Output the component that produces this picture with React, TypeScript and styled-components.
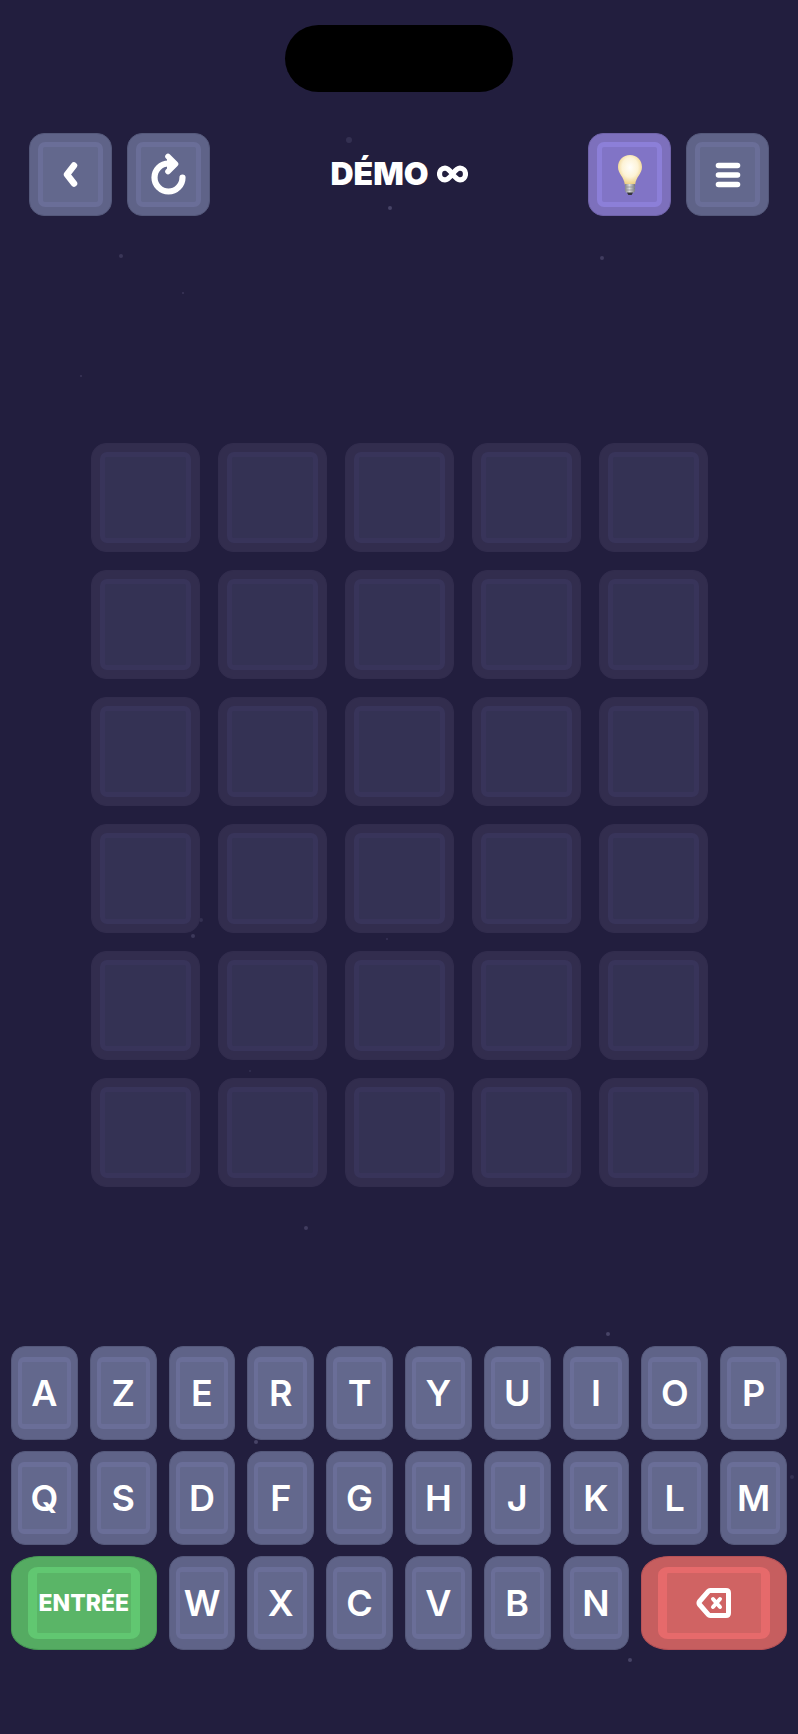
import React from "react";
import styled, { createGlobalStyle, css } from "styled-components";

const GlobalStyle = createGlobalStyle`
  *, *::before, *::after { box-sizing: border-box; }
  body { margin: 0; background: #221e3e; }
  button { font: inherit; color: inherit; margin: 0; padding: 0; cursor: pointer; }
`;

type Tone = "slate" | "violet" | "green" | "red" | "empty";

const tones: Record<Tone, { edge: string; rim: string; ring: string; face: string }> = {
  slate: { edge: "#54587a", rim: "#5f6388", ring: "#6a6e98", face: "#63688d" },
  violet: { edge: "#6f63a8", rim: "#7d70bc", ring: "#8c7fd8", face: "#8174c6" },
  green: { edge: "#479a55", rim: "#55ab62", ring: "#61c771", face: "#5ab567" },
  red: { edge: "#b75257", rim: "#c65e5f", ring: "#e66a6b", face: "#d06363" },
  empty: { edge: "#312c4d", rim: "#322d4e", ring: "#38345a", face: "#343254" },
};

const Screen = styled.div`
  position: relative;
  min-height: 100vh;
  display: flex;
  flex-direction: column;
  overflow: hidden;
  color: #fff;
  font-family: Inter, "Liberation Sans", sans-serif;
  background: #221e3e;
`;

const Sky = styled.svg`
  position: absolute;
  inset: 0;
  width: 100%;
  height: 100%;
  pointer-events: none;
`;

const StatusBar = styled.div`
  display: flex;
  justify-content: center;
  padding-top: 25px;
`;

const Island = styled.div`
  width: 228px;
  height: 67px;
  border-radius: 34px;
  background: #000;
`;

const Header = styled.header`
  position: relative;
  display: grid;
  grid-template-columns: 1fr auto 1fr;
  align-items: center;
  margin-top: 41px;
  padding: 0 29px;
`;

const Actions = styled.div<{ $end?: boolean }>`
  display: flex;
  gap: 15px;
  justify-content: ${(p) => (p.$end ? "flex-end" : "flex-start")};
`;

const Title = styled.h1`
  display: flex;
  align-items: center;
  gap: 8px;
  margin: 0;
  padding-bottom: 2px;
  font-size: 32px;
  line-height: 40px;
  font-weight: 900;
`;

const raised = css<{ $tone: Tone }>`
  display: flex;
  border: 1px solid ${(p) => tones[p.$tone].edge};
  background: ${(p) => tones[p.$tone].rim};
`;

const Face = styled.span<{ $tone: Tone; $wide?: boolean; $square?: boolean }>`
  flex: 1;
  display: flex;
  align-items: center;
  justify-content: center;
  min-width: 0;
  border-style: solid;
  border-color: ${(p) => tones[p.$tone].ring};
  border-width: ${(p) => (p.$square ? "5px" : p.$wide ? "6px 9px" : "5px 4px")};
  border-radius: ${(p) => (p.$square ? "7px" : p.$wide ? "10px / 8px" : "6px")};
  background: ${(p) => tones[p.$tone].face};
`;

const IconButton = styled.button<{ $tone: Tone }>`
  ${raised}
  width: 83px;
  height: 83px;
  padding: 8px;
  border-radius: 15px;
`;

const Board = styled.main`
  position: relative;
  display: grid;
  grid-template-columns: repeat(5, 1fr);
  gap: 18px;
  width: 78%;
  max-width: 617px;
  margin: 227px auto 0;
`;

const Tile = styled.div<{ $tone: Tone }>`
  ${raised}
  aspect-ratio: 1;
  padding: 8px;
  border-radius: 15px;
`;

const Keyboard = styled.section`
  position: relative;
  display: grid;
  grid-template-columns: repeat(10, 1fr);
  gap: 11px 12px;
  margin-top: auto;
  padding: 0 11px 84px;
`;

const Key = styled.button<{ $tone: Tone; $wide?: boolean }>`
  ${raised}
  grid-column: span ${(p) => (p.$wide ? 2 : 1)};
  height: 94px;
  padding: ${(p) => (p.$wide ? "10px 16px" : "10px 6px")};
  border-radius: ${(p) => (p.$wide ? "28px / 20px" : "14px")};
  font-size: ${(p) => (p.$wide ? 23 : 36)}px;
  font-weight: ${(p) => (p.$wide ? 800 : 600)};
`;

const stars = [
  [349, 140, 3, 0.12], [390, 208, 2, 0.25], [121, 256, 2, 0.16], [602, 258, 2, 0.2],
  [183, 293, 1, 0.16], [81, 376, 1, 0.16], [201, 920, 2, 0.12], [193, 936, 2, 0.18],
  [387, 939, 1, 0.14], [250, 1071, 1, 0.12], [306, 1228, 2, 0.2], [608, 1334, 2, 0.25],
  [256, 1442, 2, 0.25], [630, 1660, 2, 0.25], [792, 1477, 2, 0.12],
];

const BackIcon = () => (
  <svg width="26" height="28" viewBox="0 0 26 28" fill="none" stroke="#fff" strokeWidth="6.500" strokeLinecap="round" strokeLinejoin="round">
    <path d="M16 4.500L9 13.500L16 22.500" />
  </svg>
);

const RestartIcon = () => (
  <svg width="44" height="44" viewBox="0 0 44 44" fill="none" stroke="#fff" strokeWidth="6.200" strokeLinecap="round" strokeLinejoin="round">
    <path d="M35.500 24.500A14 14 0 1 1 21.500 10.500" />
    <path d="M21 3.500L28.500 11L21 18.500" strokeWidth="5.600" />
    <path d="M20 4.500L28.500 11L20 17.500Z" fill="#fff" stroke="none" />
  </svg>
);

const BulbIcon = () => (
  <svg width="26" height="42" viewBox="0 0 26 42">
    <defs>
      <radialGradient id="glass" cx="0.5" cy="0.42" r="0.6">
        <stop offset="0" stopColor="#fffefa" />
        <stop offset="0.55" stopColor="#fdf3d6" />
        <stop offset="1" stopColor="#eccb7c" />
      </radialGradient>
      <linearGradient id="cap" x1="0" x2="1" y1="0" y2="0">
        <stop offset="0" stopColor="#85858b" />
        <stop offset="0.45" stopColor="#dcdcdc" />
        <stop offset="1" stopColor="#77777d" />
      </linearGradient>
    </defs>
    <path d="M13 1C6 1 1 6.300 1 13C1 20 7 22.500 7.800 30.500H18.200C19 22.500 25 20 25 13C25 6.300 20 1 13 1Z" fill="url(#glass)" />
    <path d="M8 30H18V36C18 38 16.500 39 15.500 39H10.500C9.500 39 8 38 8 36Z" fill="url(#cap)" />
    <path d="M8 33H18M8 36H18" stroke="#8f8f95" strokeWidth="0.800" />
    <path d="M10 38.500H16L14.700 41H11.300Z" fill="#35343c" />
  </svg>
);

const MenuIcon = () => (
  <svg width="26" height="26" viewBox="0 0 26 26" stroke="#fff" strokeWidth="5.600" strokeLinecap="round">
    <path d="M3.500 3.500H22.500M3.500 13H22.500M3.500 22.500H22.500" />
  </svg>
);

const InfinityIcon = () => (
  <svg width="31" height="18" viewBox="0 0 31 18" fill="none" stroke="#fff" strokeWidth="5.200" strokeLinecap="round" strokeLinejoin="round">
    <path d="M15.500 9C12.500 5 10.500 3.200 8 3.200A5.500 5.800 0 0 0 8 14.800C10.500 14.800 12.500 13 15.500 9C18.500 5 20.500 3.200 23 3.200A5.500 5.800 0 0 1 23 14.800C20.500 14.800 18.500 13 15.500 9Z" />
  </svg>
);

const EraseIcon = () => (
  <svg width="36" height="32" viewBox="0 0 36 32" fill="none" stroke="#fff" strokeLinecap="round" strokeLinejoin="round">
    <path d="M14 3.500H30Q32.500 3.500 32.500 6V26Q32.500 28.500 30 28.500H14Q13 28.500 12.300 27.700L3.500 17.500Q2.500 16 3.500 14.500L12.300 4.300Q13 3.500 14 3.500Z" strokeWidth="5" />
    <path d="M17 12L24 20M24 12L17 20" strokeWidth="4" />
  </svg>
);

const RoundAction = ({ label, tone = "slate", children }: { label: string; tone?: Tone; children: React.ReactNode }) => (
  <IconButton type="button" aria-label={label} $tone={tone}>
    <Face $tone={tone} $square>{children}</Face>
  </IconButton>
);

const Letter = ({ value }: { value: string }) => (
  <Key type="button" $tone="slate">
    <Face $tone="slate">{value}</Face>
  </Key>
);

export default function App() {
  return (
    <>
      <GlobalStyle />
      <Screen>
        <Sky viewBox="0 0 798 1734" preserveAspectRatio="xMidYMid slice" aria-hidden="true">
          {stars.map(([x, y, r, o]) => (
            <circle key={`${x}-${y}`} cx={x} cy={y} r={r} fill="#b9b4e0" opacity={o} />
          ))}
        </Sky>
        <StatusBar>
          <Island />
        </StatusBar>
        <Header>
          <Actions>
            <RoundAction label="Retour"><BackIcon /></RoundAction>
            <RoundAction label="Recommencer"><RestartIcon /></RoundAction>
          </Actions>
          <Title>DÉMO <InfinityIcon /></Title>
          <Actions $end>
            <RoundAction label="Indice" tone="violet"><BulbIcon /></RoundAction>
            <RoundAction label="Menu"><MenuIcon /></RoundAction>
          </Actions>
        </Header>
        <Board>
          {Array.from({ length: 30 }, (_, i) => (
            <Tile key={i} $tone="empty"><Face $tone="empty" $square /></Tile>
          ))}
        </Board>
        <Keyboard>
          {[..."AZERTYUIOPQSDFGHJKLM"].map((c) => <Letter key={c} value={c} />)}
          <Key type="button" $tone="green" $wide><Face $tone="green" $wide>ENTRÉE</Face></Key>
          {[..."WXCVBN"].map((c) => <Letter key={c} value={c} />)}
          <Key type="button" aria-label="Effacer" $tone="red" $wide><Face $tone="red" $wide><EraseIcon /></Face></Key>
        </Keyboard>
      </Screen>
    </>
  );
}
